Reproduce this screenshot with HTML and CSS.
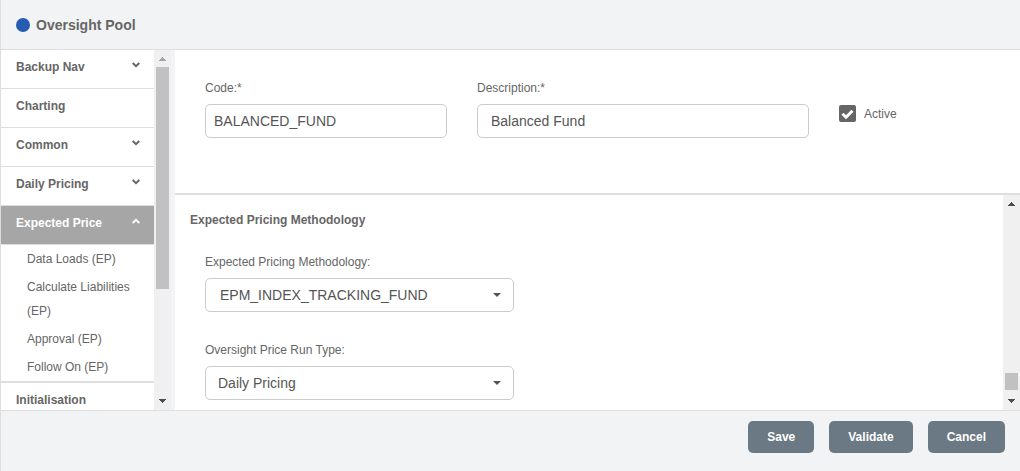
FILE: index.html
```html
<!DOCTYPE html>
<html lang="en">
<head>
<meta charset="utf-8">
<title>Oversight Pool</title>
<link rel="stylesheet" href="styles.css">
</head>
<body>
<div class="window">
  <header class="titlebar">
    <span class="dot"></span>
    <h1 class="title">Oversight Pool</h1>
  </header>
  <div class="body">
    <aside class="sidebar">
      <nav class="menu">
        <button type="button" class="item">Backup Nav<svg class="chevron" viewBox="0 0 8 6"><path d="M0.7 1L4 4.2L7.3 1"/></svg></button>
        <button type="button" class="item">Charting</button>
        <button type="button" class="item">Common<svg class="chevron" viewBox="0 0 8 6"><path d="M0.7 1L4 4.2L7.3 1"/></svg></button>
        <button type="button" class="item">Daily Pricing<svg class="chevron" viewBox="0 0 8 6"><path d="M0.7 1L4 4.2L7.3 1"/></svg></button>
        <button type="button" class="item active" aria-expanded="true">Expected Price<svg class="chevron" viewBox="0 0 8 6"><path d="M0.7 5L4 1.8L7.3 5"/></svg></button>
        <ul class="submenu">
          <li><a class="sublink" href="#">Data Loads (EP)</a></li>
          <li><a class="sublink" href="#">Calculate Liabilities (EP)</a></li>
          <li><a class="sublink" href="#">Approval (EP)</a></li>
          <li><a class="sublink" href="#">Follow On (EP)</a></li>
        </ul>
        <button type="button" class="item">Initialisation</button>
      </nav>
      <div class="scrollbar">
        <svg class="arrow dim" viewBox="0 0 17 17"><path d="M5 11L8.5 7L12 11Z"/></svg>
        <div class="track"><div class="thumb thumb-top"></div></div>
        <svg class="arrow" viewBox="0 0 17 17"><path d="M5 6L12 6L8.5 10Z"/></svg>
      </div>
    </aside>
    <main class="main">
      <section class="summary">
        <div class="field">
          <label class="label" for="code">Code:*</label>
          <input class="control code" id="code" type="text" value="BALANCED_FUND">
        </div>
        <div class="field">
          <label class="label" for="description">Description:*</label>
          <input class="control description" id="description" type="text" value="Balanced Fund">
        </div>
        <label class="check">
          <span class="checkbox">
            <input class="box" type="checkbox" checked>
            <svg class="tick" viewBox="0 0 17 17"><path d="M3.5 8.7L7 12.2L13.5 5.7"/></svg>
          </span>
          Active
        </label>
      </section>
      <div class="details">
        <section class="panel">
          <h2 class="heading">Expected Pricing Methodology</h2>
          <div class="field select-field">
            <label class="label" for="method">Expected Pricing Methodology:</label>
            <span class="select">
              <select class="control method" id="method"><option>EPM_INDEX_TRACKING_FUND</option></select>
              <svg class="caret" viewBox="0 0 8 4"><path d="M0 0H8L4 4Z"/></svg>
            </span>
          </div>
          <div class="field select-field">
            <label class="label" for="runtype">Oversight Price Run Type:</label>
            <span class="select">
              <select class="control runtype" id="runtype"><option>Daily Pricing</option></select>
              <svg class="caret" viewBox="0 0 8 4"><path d="M0 0H8L4 4Z"/></svg>
            </span>
          </div>
        </section>
        <div class="scrollbar">
          <svg class="arrow" viewBox="0 0 17 17"><path d="M5 11L8.5 7L12 11Z"/></svg>
          <div class="track track-end"><div class="thumb thumb-end"></div></div>
          <svg class="arrow" viewBox="0 0 17 17"><path d="M5 6L12 6L8.5 10Z"/></svg>
        </div>
      </div>
    </main>
  </div>
  <footer class="footer">
    <button type="button" class="btn">Save</button>
    <button type="button" class="btn">Validate</button>
    <button type="button" class="btn">Cancel</button>
  </footer>
</div>
</body>
</html>
```
FILE: styles.css
```css
* { box-sizing: border-box; }

body {
  margin: 0;
  background: #f2f3f5;
  color: #666;
  font: 12px/18px "Liberation Sans", Arial, sans-serif;
}

button, input, select { font: inherit; color: inherit; margin: 0; }

.window {
  height: 100vh;
  display: flex;
  flex-direction: column;
  border-left: 1px solid #dedede;
}

.titlebar {
  display: flex;
  align-items: center;
  gap: 6px;
  padding: 15px 15px 14px;
  border-bottom: 1px solid #dedede;
}

.dot { width: 14px; height: 14px; border-radius: 50%; background: #265bb0; }
.title { margin: 0; font-size: 14px; line-height: 20px; }

.body { flex: 1; min-height: 0; display: flex; }

.sidebar { flex: 0 0 170px; display: flex; }
.menu { flex: 1; min-width: 0; overflow: hidden; background: #fff; }

.item {
  display: flex;
  justify-content: space-between;
  width: 100%;
  padding: 8px 14px 12px 15px;
  border: 0;
  border-bottom: 1px solid #dedede;
  background: #fff;
  font-weight: bold;
  text-align: left;
}

.item.active { background: #a6a6a6; color: #fff; }

.chevron {
  width: 8px;
  height: 6px;
  margin-top: 4px;
  fill: none;
  stroke: currentColor;
  stroke-width: 2;
}

.submenu {
  display: grid;
  gap: 4px;
  margin: 0;
  padding: 2px 15px 2px 26px;
  border-bottom: 2px solid #dedede;
  list-style: none;
  line-height: 24px;
}

.sublink { display: block; color: inherit; text-decoration: none; }

.scrollbar {
  flex: 0 0 17px;
  display: flex;
  flex-direction: column;
  background: #f0f0f0;
}

.arrow { width: 17px; height: 17px; fill: #4d4d4d; shape-rendering: crispEdges; }
.arrow.dim { fill: #a3a3a3; }
.track { flex: 1; display: flex; flex-direction: column; padding: 0 2px; }
.track-end { justify-content: flex-end; padding-bottom: 3px; }
.thumb { background: #c1c1c1; }
.thumb-top { height: 68%; }
.thumb-end { height: 17px; }

.main {
  flex: 1;
  min-width: 0;
  display: flex;
  flex-direction: column;
  margin-left: 4px;
  background: #fff;
}

.summary {
  display: grid;
  grid-template-columns: minmax(0, 242px) minmax(0, 332px) auto;
  gap: 30px;
  padding: 29px 30px 55px;
  border-bottom: 2px solid #dedede;
}

.field { display: flex; flex-direction: column; gap: 7px; }

.control {
  width: 100%;
  height: 34px;
  border: 1px solid #ccc;
  border-radius: 5px;
  background: #fff;
  color: #555;
  font-size: 14px;
}

.code { padding: 0 8px; }
.description { padding: 0 13px; }

.check { display: flex; align-items: flex-start; gap: 8px; align-self: start; padding-top: 26px; }
.checkbox { display: grid; }
.box, .tick { grid-area: 1 / 1; width: 17px; height: 17px; }
.box { appearance: none; border-radius: 2px; background: #666; }
.tick { z-index: 1; fill: none; stroke: #fff; stroke-width: 3; pointer-events: none; }

.details { flex: 1; min-height: 0; display: flex; }
.panel { flex: 1; min-width: 0; overflow: hidden; padding: 16px 15px 0; }
.heading { margin: 0 0 24px; font-size: 12px; line-height: 18px; }
.select-field { max-width: 324px; margin-bottom: 29px; padding-left: 15px; }

.select { display: grid; align-items: center; }
.select .control { grid-area: 1 / 1; appearance: none; }
.method { padding: 0 30px 0 14px; }
.runtype { padding: 0 30px 0 12px; }

.caret {
  grid-area: 1 / 1;
  z-index: 1;
  justify-self: end;
  width: 8px;
  height: 4px;
  margin-right: 13px;
  fill: #555;
  pointer-events: none;
}

.footer {
  display: flex;
  justify-content: flex-end;
  gap: 15px;
  padding: 10px 15px 18px;
  border-top: 1px solid #dedede;
}

.btn {
  height: 32px;
  padding: 0 19px;
  border: 0;
  border-radius: 5px;
  background: #6a7983;
  color: #fff;
  font-weight: bold;
}
```
